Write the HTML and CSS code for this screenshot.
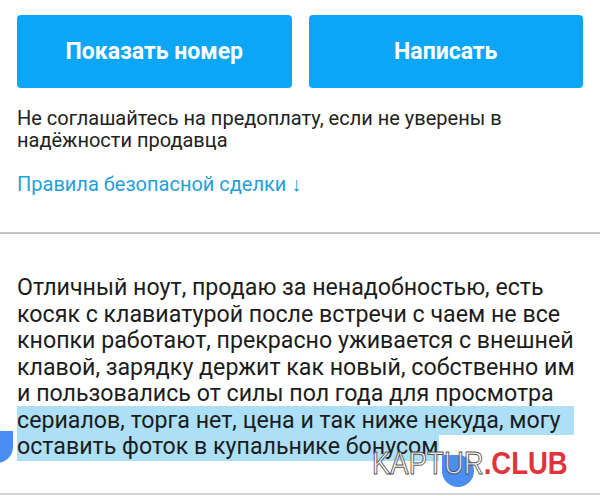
FILE: index.html
```html
<!DOCTYPE html>
<html lang="ru">
<head>
  <meta charset="UTF-8" />
  <meta name="viewport" content="width=device-width, initial-scale=1.0" />
  <title>Объявление</title>
  <link rel="stylesheet" href="styles.css">
</head>
<body>
  <div class="actions">
    <button class="btn">Показать номер</button>
    <button class="btn">Написать</button>
  </div>

  <div class="notice">
    <p class="warning">Не соглашайтесь на предоплату, если не уверены в надёжности продавца</p>
    <a class="rules" href="#">Правила безопасной сделки ↓</a>
  </div>

  <div class="description">
    <p class="text">Отличный ноут, продаю за ненадобностью, есть<br>
      косяк с клавиатурой после встречи с чаем не все<br>
      кнопки работают, прекрасно уживается с внешней<br>
      клавой, зарядку держит как новый, собственно им<br>
      и пользовались от силы пол года для просмотра<br>
      <span class="selected selected-wide">сериалов, торга нет, цена и так ниже некуда, могу </span><br><span class="selected">оставить фоток в купальнике бонусом</span></p>
    <span class="handle handle-start"></span>
    <span class="handle handle-end"></span>
    <div class="watermark"><span class="wm-light">KAPTUR</span><span class="wm-red">.CLUB</span></div>
  </div>
</body>
</html>
```

FILE: styles.css
```css
body {
  margin: 0;
  background: #fff;
  font-family: Roboto, "Noto Sans", Arial, sans-serif;
  color: #212121;
  overflow: hidden;
  height: 496px;
}
.actions {
  display: flex;
  gap: 17px;
  padding: 15px 17px 0;
}
.btn {
  flex: 1;
  height: 73px;
  border: none;
  border-radius: 4px;
  background: #0ba7f6;
  color: #fff;
  font-family: inherit;
  font-weight: bold;
  font-size: 23px;
  cursor: pointer;
}
.notice {
  padding: 19px 17px 0;
  height: 125px;
  border-bottom: 2px solid #c4c4c4;
}
.warning {
  margin: 0;
  font-size: 20px;
  line-height: 22px;
  color: #222;
}
.rules {
  display: block;
  margin-top: 22px;
  font-size: 20px;
  line-height: 22px;
  color: #259fd9;
  text-decoration: none;
}
.description {
  position: relative;
  padding: 40px 17px 0;
  height: 219px;
  border-bottom: 2px solid #d4d4d4;
}
.text {
  margin: 0;
  font-size: 23.2px;
  line-height: 26.5px;
  color: #1c1c1c;
  white-space: nowrap;
}
.selected {
  background: #ade0f6;
  padding: 0 0 1px;
}
.selected-wide {
  padding-right: 14px;
}
.handle {
  position: absolute;
  width: 32px;
  height: 32px;
  background: #4a8ef2;
  border-radius: 50%;
}
.handle-start {
  left: -19px;
  top: 197px;
  border-top-right-radius: 0;
}
.handle-end {
  left: 442px;
  top: 221px;
  border-top-left-radius: 0;
}
.watermark {
  position: absolute;
  left: 372px;
  top: 211px;
  font-family: "Liberation Sans", Arial, sans-serif;
  font-size: 32px;
  line-height: 36px;
  transform: scaleX(0.86);
  transform-origin: left center;
}
.wm-light {
  color: rgba(255, 255, 255, 0.75);
  -webkit-text-stroke: 1px #555;
}
.wm-red {
  color: #e0343a;
  font-weight: bold;
}
```
